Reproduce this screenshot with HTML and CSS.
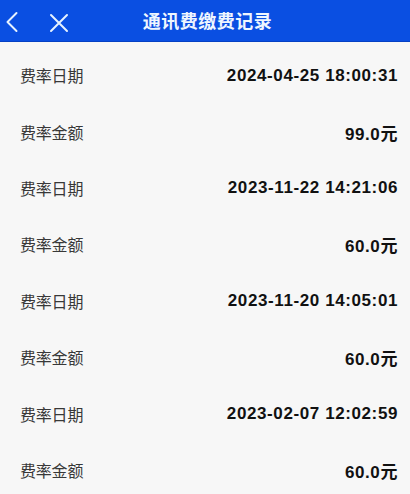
FILE: index.html
```html
<!DOCTYPE html>
<html lang="zh">
<head>
<meta charset="utf-8">
<link rel="stylesheet" href="styles.css">
</head>
<body>
<div class="page">
  <header class="nav">
    <div class="nav-icons">
      <svg class="ic-back" width="14" height="22" viewBox="0 0 14 22"><path d="M11.5 2 L2.5 11 L11.5 20" fill="none" stroke="#e6f2ff" stroke-width="2" stroke-linecap="round" stroke-linejoin="round"/></svg>
      <svg class="ic-close" width="20" height="20" viewBox="0 0 20 20"><path d="M2 2 L18 18 M18 2 L2 18" fill="none" stroke="#e6f2ff" stroke-width="2" stroke-linecap="round"/></svg>
    </div>
    <div class="nav-title">通讯费缴费记录</div>
  </header>
  <main class="list">
    <div class="row"><span class="label">费率日期</span><span class="value">2024-04-25 18:00:31</span></div>
    <div class="row"><span class="label">费率金额</span><span class="value">99.0元</span></div>
    <div class="row"><span class="label">费率日期</span><span class="value">2023-11-22 14:21:06</span></div>
    <div class="row"><span class="label">费率金额</span><span class="value">60.0元</span></div>
    <div class="row"><span class="label">费率日期</span><span class="value">2023-11-20 14:05:01</span></div>
    <div class="row"><span class="label">费率金额</span><span class="value">60.0元</span></div>
    <div class="row"><span class="label">费率日期</span><span class="value">2023-02-07 12:02:59</span></div>
    <div class="row"><span class="label">费率金额</span><span class="value">60.0元</span></div>
  </main>
</div>
</body>
</html>
```
FILE: styles.css
```css
* { box-sizing: border-box; }
html, body { margin: 0; padding: 0; }
body {
  width: 410px;
  height: 494px;
  overflow: hidden;
  background: #f7f7f7;
  font-family: "Liberation Sans", "Noto Sans CJK SC", sans-serif;
}
.page { width: 410px; }
.nav {
  position: relative;
  height: 42px;
  background: #0a4fe2;
  border-bottom: 1px solid #0640c4;
  display: flex;
  align-items: center;
  justify-content: center;
}
.nav-icons {
  position: absolute;
  left: 5px;
  top: 11px;
  display: flex;
  align-items: center;
  gap: 30px;
}
.ic-close { margin-top: 1px; }
.nav-title {
  color: #eef6ff;
  font-family: "Noto Sans CJK SC", sans-serif;
  font-weight: 700;
  font-size: 18px;
  letter-spacing: 0.5px;
  margin-left: 5px;
  margin-top: -1px;
}
.list { padding-top: 5px; }
.row {
  height: 56.4px;
  display: flex;
  align-items: center;
  justify-content: space-between;
  padding: 0 12px 0 20px;
}
.label {
  font-family: "Noto Sans CJK SC", sans-serif;
  font-size: 16px;
  color: #383838;
  letter-spacing: -0.2px;
}
.value {
  font-family: "Liberation Sans", "Noto Sans CJK SC", sans-serif;
  font-weight: 700;
  font-size: 17px;
  color: #111;
  letter-spacing: 0.6px;
  margin-top: 1px;
}
```
